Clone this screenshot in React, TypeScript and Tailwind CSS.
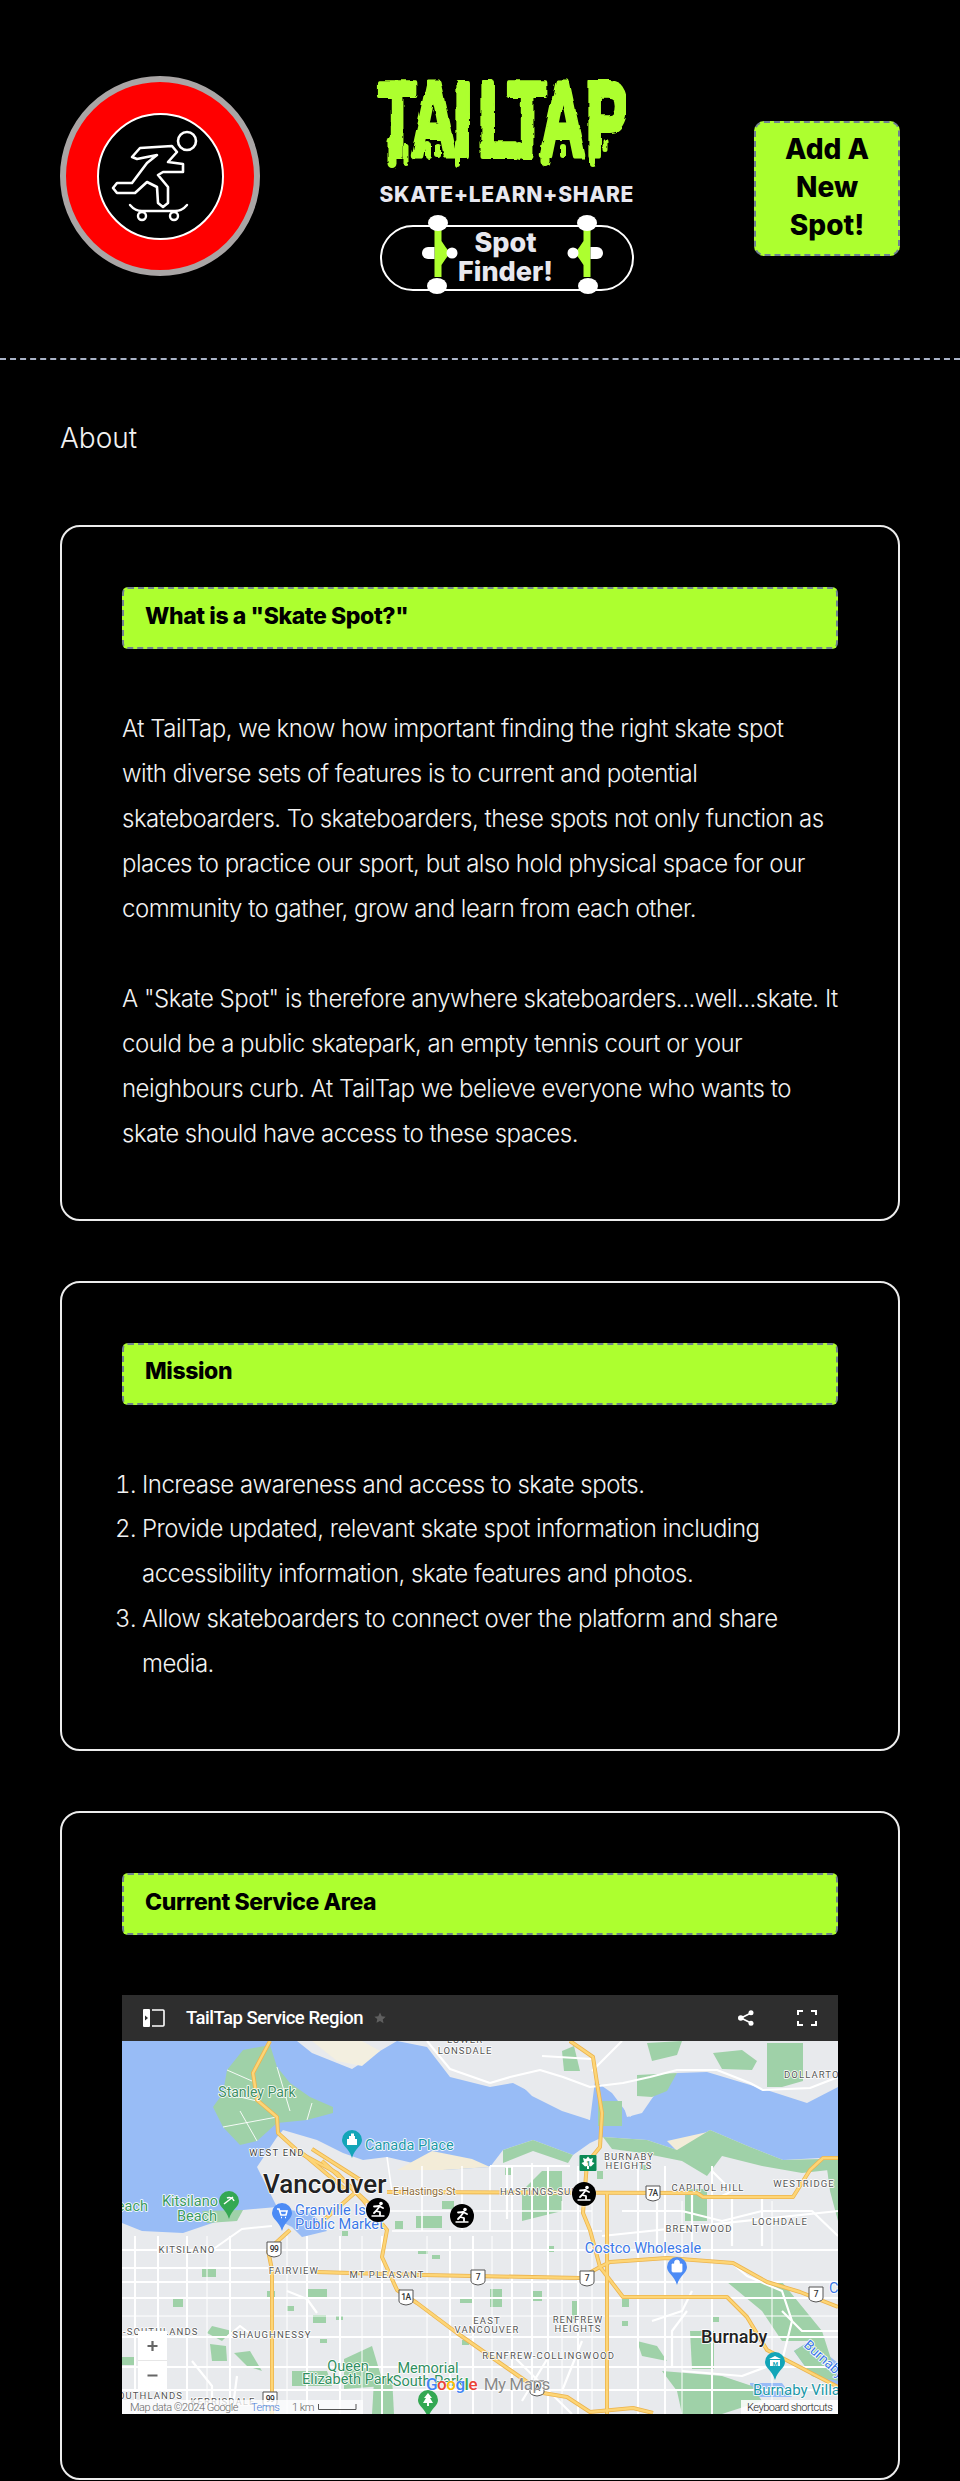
import React from "react";

const green = "#9fd1a8";
const parks: string[] = [
  "M148 4L121 9L105 29L101 52L91 66L101 86L118 104L135 100L155 82L185 79L211 72L211 66L188 56L168 42L155 26Z",
  "M645 2L681 2L681 40L660 46L645 46Z",
  "M515 34L555 32L545 50L530 56L515 55Z",
  "M525 2L560 0L555 14L530 20Z",
  "M591 12L620 9L635 20L630 29L600 28Z",
  "M420 130L440 130L440 170L400 180L400 150Z",
  "M381 109L411 99L451 114L446 122L411 110L381 122Z",
  "M481 96L525 99L555 109L588 89L628 106L661 119L700 118L716 116L716 128L680 132L640 125L600 115L585 135L560 120L520 112L490 108Z",
  "M704 120L716 120L716 180L708 150Z",
  "M563 148L585 148L585 180L563 180Z",
  "M80 170L121 169L115 180L85 182Z",
  "M568 290L592 290L592 328L570 328Z",
  "M540 330L600 335L630 345L640 360L600 373L560 373L555 350Z",
  "M605 241L660 241L700 290L716 340L690 335L672 310L688 300L660 300L640 270Z",
  "M170 330L205 330L210 345L170 345Z",
  "M222 318L250 305L262 345L222 348Z",
  "M90 285L110 290L100 300L85 292Z",
  "M88 303L104 305L105 320L90 320Z",
  "M112 312L128 310L140 330L125 325Z",
  "M186 248L205 248L205 258L186 258Z",
  "M252 340L270 335L272 373L250 373Z",
  "M515 300L535 305L545 320L520 315Z",
  "M476 60L500 60L500 85L476 85Z",
  "M440 10L452 5L458 30L442 30Z",
];
const smallParks = [
  [80, 228, 14, 8], [51, 258, 10, 8], [145, 250, 8, 6], [191, 274, 13, 8], [214, 275, 7, 4], [165, 265, 7, 5],
  [0, 316, 14, 8], [198, 298, 7, 4], [338, 256, 14, 6], [368, 248, 12, 18], [340, 299, 7, 5], [500, 280, 6, 5],
  [410, 250, 10, 10], [450, 260, 6, 18], [500, 258, 7, 8], [590, 276, 7, 5], [518, 124, 8, 5],
  [383, 127, 7, 7], [296, 208, 10, 5], [310, 214, 8, 4], [475, 130, 6, 8], [320, 160, 12, 8], [294, 175, 26, 12],
  [273, 180, 8, 8], [220, 190, 6, 5], [426, 205, 6, 6],
];
const yellow: string[] = [
  "M148 0L131 32L135 59L155 76L156 92L178 112L215 132L241 159L265 189L260 216L275 249L295 262L335 292L388 329L421 352L445 356L468 371L511 367L531 372",
  "M146 209L150 229L150 373",
  "M168 189L146 209",
  "M195 231L228 232L301 234L458 237L478 226L488 221L545 217L611 222L645 241L678 251L716 266",
  "M265 151L575 152L581 156L671 156L688 129L701 117L716 117",
  "M448 0L471 16L475 42L480 72L478 106L465 122L461 172L468 189L478 226L501 256L605 256L625 276L645 309L716 346",
  "M485 152L485 373",
  "M180 112L225 150M190 108L240 140M200 120L255 170M195 185L235 150",
];
const vLines = [13, 36, 65, 108, 185, 218, 260, 328, 351, 390, 410, 426, 456, 516, 543, 590];
const hLines = [209, 241, 257, 296, 326, 349];
const thinV = [85, 165, 240, 305, 370, 440, 470, 560, 650];
const thinH = [275];
const white: string[] = [
  "M368 42L388 36L418 29L441 36L468 46L501 42L528 36L555 29L595 29L628 42L641 49L688 47L716 36",
  "M305 0L328 28L368 42",
  "M420 15L470 18M500 0L470 30",
  "M385 125L385 178M368 125L448 125",
  "M535 150L535 205M570 150L570 205M610 155L610 205M640 155L640 205",
  "M480 195L716 170",
  "M500 170L560 170L600 180L640 170L690 170L716 195",
  "M590 130L610 150L600 155",
  "M610 222L625 235L660 250L670 280L660 320L620 335L560 330",
  "M716 290L680 290L660 270",
  "M530 280L560 270L570 250M565 270L550 290L550 325",
  "M386 310L450 373M430 310L400 360M460 300L440 350",
  "M105 296L118 285L135 298M70 320L90 345L90 373M115 335L110 373",
  "M165 250L185 258L195 272",
];

function T({ x, y, s = 9.5, c = "#555", a = "middle", w = 400, ls = 0, h = true, children, rot }: any) {
  return (
    <text x={x} y={y} fontSize={s} fill={c} textAnchor={a} fontWeight={w} letterSpacing={ls} stroke={h ? "#ffffff" : "none"} strokeWidth={h ? 1.6 : 0} paintOrder="stroke" strokeLinejoin="round" transform={rot ? `rotate(${rot} ${x} ${y})` : undefined}>
      {children}
    </text>
  );
}
function Shield({ x, y, t, c = "#333" }: any) {
  return (
    <g transform={`translate(${x} ${y})`}>
      <path d="M-7 -7L7 -7L7 4Q7 7 0 8Q-7 7 -7 4Z" fill="#fff" stroke="#555" strokeWidth="1" />
      <text x="0" y="3" fontSize="8.5" textAnchor="middle" fill={c} fontWeight="500">{t}</text>
    </g>
  );
}
function Pin({ x, y, c, tip = 18, children }: any) {
  return (
    <g transform={`translate(${x} ${y})`}>
      <path d={`M-10 0A10 10 0 1 1 10 0C10 6 3 8 0 ${tip}C-3 8 -10 6 -10 0Z`} fill={c} />
      {children}
    </g>
  );
}
function Skater({ x, y }: any) {
  return (
    <g transform={`translate(${x} ${y})`}>
      <circle r="12.5" fill="#fff" opacity="0.35" cy="0.8" />
      <circle r="12" fill="#000" />
      <circle cx="3" cy="-6.5" r="1.8" fill="#fff" />
      <path d="M-4 -3.5L2 -4L-2 1L-4 3M-2 1L2 2L2 5M1 -4L5 -2" fill="none" stroke="#fff" strokeWidth="1.8" strokeLinecap="round" strokeLinejoin="round" />
      <path d="M-6 6L6 6" stroke="#fff" strokeWidth="1.4" strokeLinecap="round" />
    </g>
  );
}

function MapDrawing() {
  return (
    <svg viewBox="0 0 716 373" width="716" height="373" className="block [font-family:Roboto,sans-serif]">
      <rect width="716" height="373" fill="#e8eaed" />
      <path d="M0 0L175 0L190 12L230 28L258 10L275 0L305 6L328 36L368 46L391 42L418 56L468 79L473 40L490 52L508 76L531 56L555 32L585 31L635 46L685 62L716 46L716 116L661 119L628 106L588 89L555 109L525 99L481 96L468 102L451 114L411 99L381 109L368 126L321 129L265 116L241 119L221 112L195 99L161 89L155 96L135 126L145 146L155 166L121 169L108 176L61 192L20 190L0 182Z" fill="#98bcf6" />
      <path d="M160 168L190 172L205 190L180 196L170 186L158 180Z" fill="#98bcf6" />
      <path d="M688 300L716 322L716 345L690 335L672 310Z" fill="#98bcf6" />
      <path d="M628 342L660 342L670 356L630 356Z" fill="#98bcf6" />
      <path d="M190 0L240 0L258 10L240 25L215 20Z" fill="#f3efe0" />
      <path d="M275 129L310 110L350 118L368 126L321 129Z" fill="#f3ecd8" />
      <path d="M400 45L440 40L468 60L468 79L440 70L410 55Z" fill="#e8eaed" />
      <path d="M500 60L531 56L520 72L505 76Z" fill="#e8eaed" />
      <path d="M545 100L590 90L600 110L560 115Z" fill="#f3ecd8" />
      {parks.map((d, i) => <path key={i} d={d} fill={green} />)}
      {smallParks.map((r, i) => <rect key={i} x={r[0]} y={r[1]} width={r[2]} height={r[3]} fill={green} />)}
      <g stroke="#ffffff" fill="none">
        <path d="M105 29L130 40M101 52L135 60M101 86L155 76M155 26L168 70M185 79L190 62M135 100L118 70" strokeWidth="0.9" />
        {thinV.map((x) => <path key={x} d={`M${x} ${x > 400 && x < 700 ? 160 : 195}V373`} strokeWidth="1" />)}
        {thinH.map((y) => <path key={y} d={`M0 ${y}H716`} strokeWidth="1" />)}
        {vLines.map((x) => <path key={x} d={`M${x} ${x > 370 ? 125 : 195}V373`} strokeWidth="2" />)}
        {hLines.map((y) => <path key={y} d={`M0 ${y}H716`} strokeWidth="2" />)}
        <path d="M265 116L270 151M300 125L300 190M340 125L340 190M368 125L368 190M410 122L410 190M265 170L470 170M270 190L480 190" strokeWidth="1.6" />
        <path d="M0 227H146M150 185L120 188L90 209" strokeWidth="2" />
        {white.map((d, i) => <path key={i} d={d} strokeWidth="2.2" strokeLinejoin="round" />)}
      </g>
      <g fill="none" strokeLinejoin="round">
        {yellow.map((d, i) => <path key={i} d={d} stroke="#ecb44e" strokeWidth="4" />)}
        {yellow.map((d, i) => <path key={i} d={d} stroke="#fdd576" strokeWidth="2.4" />)}
      </g>

      <T x={343} y={2} ls={1}>LOWER</T>
      <T x={343} y={13} ls={1}>LONSDALE</T>
      <T x={135} y={56} s={14} c="#3f8f63">Stanley Park</T>
      <T x={155} y={115} ls={1.2} c="#444">WEST END</T>
      <T x={243} y={109} s={14.5} c="#1b98a8" a="start">Canada Place</T>
      <T x={141} y={152} s={26} c="#222" a="start" w={500}>Vancouver</T>
      <T x={271} y={154} s={10.5} c="#8a6a3a" a="start">E Hastings St</T>
      <T x={378} y={154} ls={1} a="start" c="#555">HASTINGS-SUI</T>
      <T x={68} y={165} s={14.5} c="#3a9a5f">Kitsilano</T>
      <T x={75} y={180} s={14.5} c="#3a9a5f">Beach</T>
      <T x={26} y={170} s={14.5} c="#3a9a5f" a="end">Beach</T>
      <T x={173} y={174} s={14.5} c="#3b78e7" a="start">Granville Isl</T>
      <T x={173} y={188} s={14.5} c="#3b78e7" a="start">Public Market</T>
      <T x={507} y={119} ls={1.1}>BURNABY</T>
      <T x={507} y={128} ls={1.1}>HEIGHTS</T>
      <T x={586} y={150} ls={1.1}>CAPITOL HILL</T>
      <T x={682} y={146} ls={1.1}>WESTRIDGE</T>
      <T x={662} y={37} ls={1.1} a="start">DOLLARTON</T>
      <T x={658} y={184} ls={1.1}>LOCHDALE</T>
      <T x={577} y={191} ls={1.1}>BRENTWOOD</T>
      <T x={65} y={212} ls={1.1}>KITSILANO</T>
      <T x={172} y={233} ls={1.1}>FAIRVIEW</T>
      <T x={265} y={237} ls={1.1}>MT PLEASANT</T>
      <T x={1} y={294} ls={1.1} a="start">-SOUTHLANDS</T>
      <T x={150} y={297} ls={1.1}>SHAUGHNESSY</T>
      <T x={365} y={283} ls={1.1}>EAST</T>
      <T x={365} y={292} ls={1.1}>VANCOUVER</T>
      <T x={456} y={282} ls={1.1}>RENFREW</T>
      <T x={456} y={291} ls={1.1}>HEIGHTS</T>
      <T x={493} y={318} ls={1.1} a="end">RENFREW-COLLINGWOOD</T>
      <T x={61} y={358} ls={1.1} a="end">SOUTHLANDS</T>
      <T x={101} y={364} ls={1.1}>KERRISDALE</T>
      <T x={226} y={330} s={14.5} c="#2f8f5f">Queen</T>
      <T x={226} y={343} s={14.5} c="#2f8f5f">Elizabeth Park</T>
      <T x={306} y={332} s={14.5} c="#2f8f5f">Memorial</T>
      <T x={306} y={345} s={14.5} c="#2f8f5f">South Park</T>
      <T x={521} y={212} s={14.5} c="#3b78e7">Costco Wholesale</T>
      <T x={707} y={252} s={14.5} c="#3b78e7" a="start">Costco</T>
      <T x={579} y={302} s={18} c="#222" a="start" w={500}>Burnaby</T>
      <T x={681} y={305} s={13.5} c="#3b78e7" a="start" rot={42}>Burnaby Lake</T>
      <T x={631} y={354} s={15} c="#1b98a8" a="start">Burnaby Village</T>

      <Shield x={152} y={208} t="99" />
      <Shield x={148} y={358} t="99" />
      <Shield x={356} y={236} t="7" />
      <Shield x={284} y={256} t="1A" />
      <Shield x={465} y={237} t="7" />
      <Shield x={694} y={253} t="7" />
      <Shield x={531} y={152} t="7A" />
      <Shield x={415} y={347} t="A" />
      <g transform="translate(466 122)">
        <rect x="-8.5" y="-8" width="17" height="16" rx="1" fill="#0b8a55" />
        <path d="M0 -6.5L2 -4L5 -5L4 -1L6.5 0L3 3.5L1 3L1 6L-1 6L-1 3L-3 3.5L-6.5 0L-4 -1L-5 -5L-2 -4Z" fill="#fff" />
        <text y="3" fontSize="7" textAnchor="middle" fill="#0b8a55" fontWeight="700">1</text>
      </g>

      <Pin x={230} y={99} c="#13a5b8" tip={18}><path d="M-5 5V-1H-3V-4H-1V-6.5H2V-4H3V-1H5V5Z" fill="#fff" /></Pin>
      <Pin x={107} y={160} c="#34a853" tip={18}><path d="M-5 3L4 -4M-2 -3A5 5 0 0 1 5 0" stroke="#fff" strokeWidth="1.5" fill="none" /></Pin>
      <Pin x={160} y={172} c="#4c8bf5" tip={18}><path d="M-5 -4H-3L-1 2H4L5 -2H-2M-1 4.5H0M3 4.5H4" stroke="#fff" strokeWidth="1.6" fill="none" /></Pin>
      <Pin x={555} y={226} c="#4c8bf5" tip={18}><path d="M-5 -3H5V4Q5 5 4 5H-4Q-5 5 -5 4ZM-2.5 -3V-4.5A2.5 2.5 0 0 1 2.5 -4.5V-3" fill="#fff" stroke="#fff" strokeWidth="0.8" /></Pin>
      <Pin x={653} y={321} c="#13a5b8" tip={18}><path d="M-6 -3L0 -6L6 -3ZM-5 -2H5V4H-5Z" fill="#fff" /><text y="3.5" fontSize="6" textAnchor="middle" fill="#13a5b8" fontWeight="700">M</text></Pin>
      <Pin x={306} y={359} c="#34a853" tip={18}><path d="M0 -7L4 -2H2L5 3H1V6H-1V3H-5L-2 -2H-4Z" fill="#fff" /></Pin>

      <Skater x={256} y={169} />
      <Skater x={340} y={175} />
      <Skater x={462} y={153} />

      <text x={304} y={349} fontSize="17" fontWeight="500" stroke="#fff" strokeWidth="1" paintOrder="stroke">
        <tspan fill="#4285f4">G</tspan><tspan fill="#ea4335">o</tspan><tspan fill="#fbbc05">o</tspan><tspan fill="#4285f4">g</tspan><tspan fill="#34a853">l</tspan><tspan fill="#ea4335">e</tspan>
        <tspan fill="#8a8a8a" dx="3" fontWeight="400"> My Maps</tspan>
      </text>

      <rect x="16" y="290" width="29" height="59" fill="#fff" />
      <path d="M16 319.5H45" stroke="#e6e6e6" />
      <path d="M25.5 305H35.5M30.5 300V310M25.5 334.5H35.5" stroke="#666" strokeWidth="2.2" />
      <rect x="0" y="359" width="241" height="14" fill="#fff" fillOpacity="0.75" />
      <text x="8" y="370" fontSize="11" fill="#666">Map data ©2024 Google</text>
      <text x="129" y="370" fontSize="11" fill="#4a7fd8">Terms</text>
      <text x="170" y="370" fontSize="11" fill="#666">1 km</text>
      <path d="M196.5 363V368.5H234V363" fill="none" stroke="#555" strokeWidth="1" />
      <rect x="619" y="359" width="97" height="14" fill="#fff" fillOpacity="0.85" />
      <text x="625" y="370" fontSize="11" fill="#222">Keyboard shortcuts</text>
    </svg>
  );
}

function MapHeader() {
  return (
    <div className="flex h-[46px] items-center bg-[#2e2e2e] [font-family:Roboto,sans-serif]">
      <svg width="22" height="18" viewBox="0 0 22 18" className="ml-[21px]">
        <rect x="0" y="0" width="7" height="18" rx="1" fill="#fff" />
        <path d="M9 1H20a1 1 0 0 1 1 1V16a1 1 0 0 1-1 1H9" fill="none" stroke="#fff" strokeWidth="1.6" />
        <path d="M2 6.5L5 9L2 11.5Z" fill="#2e2e2e" />
      </svg>
      <span className="ml-[21px] text-[18.5px] font-medium text-white">TailTap Service Region</span>
      <svg width="12" height="12" viewBox="0 0 24 24" className="ml-[11px]" fill="#5f5f5f"><path d="M12 1l3.4 7.3 7.9 1-5.8 5.5 1.5 7.9L12 18l-7 3.7 1.5-7.9L.7 9.3l7.9-1z" /></svg>
      <svg width="16" height="16" viewBox="0 0 16 16" className="ml-auto" fill="#fff">
        <circle cx="13" cy="2.8" r="2.5" /><circle cx="13" cy="13.2" r="2.5" /><circle cx="2.8" cy="8" r="2.8" />
        <path d="M3 8L13 3M3 8L13 13" stroke="#fff" strokeWidth="1.6" />
      </svg>
      <svg width="20" height="16" viewBox="0 0 20 16" className="ml-[43px] mr-[21px]" fill="none" stroke="#fff" strokeWidth="2">
        <path d="M1 5V1H6M14 1H19V5M19 11V15H14M6 15H1V11" />
      </svg>
    </div>
  );
}

function SkaterLogo() {
  return (
    <svg viewBox="0 0 123 123" width="123" height="123" fill="none" stroke="#fff" strokeLinejoin="round" strokeLinecap="round">
      <g transform="translate(-39 -39)">
        <circle cx="127" cy="65" r="9" strokeWidth="2.6" />
        <path d="M72 81L80 72L112 70L117 76L108 86L123 88L123 96L103 96L98 99L108 111L108 127L103 131L98 127L97 111L87 106L75 117L57 117L53 112L57 107L72 107L87 87L97 79L77 83Z" strokeWidth="2.6" />
        <path d="M70 129Q75 135 82 135L115 135Q122 135 127 129" strokeWidth="2.4" />
        <circle cx="82" cy="140" r="4" strokeWidth="2.4" />
        <circle cx="114" cy="140" r="4" strokeWidth="2.4" />
      </g>
    </svg>
  );
}

function Truck({ x, flip }: { x: number; flip?: boolean }) {
  return (
    <g transform={`translate(${x} 0) scale(${flip ? -1 : 1} 1)`}>
      <path d="M-3.5 8V56H3.5V44C6 40 9 36 12 32C9 28 6 24 3.5 20V8Z" fill="#adff2f" />
      <ellipse cx="0" cy="2" rx="10" ry="8" fill="#fff" />
      <ellipse cx="-1" cy="65" rx="10" ry="8" fill="#fff" />
      <path d="M-3.5 26H-10A6 6 0 0 0 -10 38H-3.5Z" fill="#fff" />
      <circle cx="14" cy="32" r="5.5" fill="#fff" />
    </g>
  );
}

function Logo() {
  const sx = 0.59;
  const xs = [0, 33, 76, 101, 130, 162, 208].map((v) => (v + 2) / sx).join(" ");
  const drips = [
    [16, 60, 30, 4.5], [30, 66, 22, 2.5], [52, 64, 16, 3], [62, 66, 14, 3], [82, 62, 28, 3], [106, 62, 18, 2.5], [122, 64, 14, 3],
    [143, 64, 17, 3], [170, 62, 27, 4.5], [187, 66, 14, 3], [200, 62, 14, 2.5], [216, 64, 24, 3], [229, 60, 14, 2.5],
  ];
  return (
    <svg viewBox="0 0 250 92" width="250" height="92" className="-ml-[4px] block">
      <defs>
        <filter id="slime" x="-5%" y="-5%" width="110%" height="110%">
          <feTurbulence type="fractalNoise" baseFrequency="0.09" numOctaves="2" seed="4" />
          <feDisplacementMap in="SourceGraphic" scale="5" />
        </filter>
      </defs>
      <g filter="url(#slime)">
        <text y="78" fontSize="106" fontWeight="700" fill="#adff2f" stroke="#adff2f" strokeWidth="6" strokeLinejoin="round" transform={`scale(${sx} 1)`} x={xs} className="[font-family:'Liberation_Sans',Arial,sans-serif]">TAILTAP</text>
        {drips.map((d, i) => <rect key={i} x={d[0] - d[3]} y={d[1]} width={d[3] * 2} height={d[2]} rx={d[3]} fill="#adff2f" />)}
      </g>
    </svg>
  );
}

function Bar({ children }: { children: React.ReactNode }) {
  return (
    <div className="flex h-[62px] items-center rounded-[6px] border-2 border-dashed border-[#708090] bg-[#adff2f] pb-[4px] pl-[21px] text-[23px] font-extrabold tracking-[-0.4px] text-black [font-family:Inter,sans-serif]">
      {children}
    </div>
  );
}

function Card({ title, children, last }: { title: string; children: React.ReactNode; last?: boolean }) {
  return (
    <section className={`rounded-[20px] border-2 border-[#ececec] p-[60px] ${last ? "" : "mb-[60px]"}`}>
      <Bar>{title}</Bar>
      <div className="mt-[60px] text-2xl leading-[44.96px] font-light tracking-[-0.5px] whitespace-nowrap text-[#f2f2f2] [font-family:Inter,sans-serif]">{children}</div>
    </section>
  );
}

export default function App() {
  return (
    <div className="min-h-[2481px] bg-black text-white [font-family:Inter,sans-serif]">
      <header className="flex h-[360px] items-start justify-between border-b-2 border-dashed border-[#aab4c8] px-[60px] pt-[76px]">
        <div className="flex h-[200px] w-[200px] items-center justify-center rounded-full border-[6px] border-[#a9a5a5] bg-[#ff0000]">
          <div className="flex h-[127px] w-[127px] items-center justify-center rounded-full border-2 border-white bg-black">
            <SkaterLogo />
          </div>
        </div>
        <div className="mt-[2px] -ml-[1px] w-[254px]">
          <Logo />
          <div className="mt-[13px] text-center text-[21px] leading-[24px] font-extrabold tracking-[0.7px] whitespace-nowrap text-[#e8e8f0]">SKATE+LEARN+SHARE</div>
          <div className="relative mt-[18px] flex h-[66px] w-[254px] items-center justify-center rounded-full border-2 border-white text-center text-[27px] leading-[29px] font-extrabold text-[#e8e8ee]">
            <span className="-mt-[3px] -ml-[2px]">Spot<br />Finder!</span>
            <svg viewBox="0 0 254 73" width="254" height="73" className="absolute top-[-6px] left-[-2px] overflow-visible">
              <Truck x={58} />
              <Truck x={207} flip />
            </svg>
          </div>
        </div>
        <div className="mt-[45px] flex h-[135px] w-[146px] items-center justify-center rounded-[10px] border-2 border-dashed border-[#708090] bg-[#adff2f] pb-[3px] text-center text-[28px] leading-[38px] font-extrabold text-black">
          <span>Add A<br />New<br />Spot!</span>
        </div>
      </header>
      <main className="px-[60px]">
        <h1 className="mt-[60px] mb-[69px] text-[28px] leading-[36px] font-light text-[#f2f2f2]">About</h1>
        <Card title={'What is a "Skate Spot?"'}>
          <p className="-mt-[2px] mb-[2px]">
            At TailTap, we know how important finding the right skate spot<br />
            with diverse sets of features is to current and potential<br />
            skateboarders. To skateboarders, these spots not only function as<br />
            places to practice our sport, but also hold physical space for our<br />
            community to gather, grow and learn from each other.<br /><br />
            A "Skate Spot" is therefore anywhere skateboarders...well...skate. It<br />
            could be a public skatepark, an empty tennis court or your<br />
            neighbours curb. At TailTap we believe everyone who wants to<br />
            skate should have access to these spaces.
          </p>
        </Card>
        <Card title="Mission">
          <ol className="-mt-[2px] mb-[2px] list-decimal pl-[20px]">
            <li>Increase awareness and access to skate spots.</li>
            <li>Provide updated, relevant skate spot information including<br />accessibility information, skate features and photos.</li>
            <li>Allow skateboarders to connect over the platform and share<br />media.</li>
          </ol>
        </Card>
        <Card title="Current Service Area" last>
          <div className="mb-[4px] leading-none">
            <MapHeader />
            <MapDrawing />
          </div>
        </Card>
      </main>
    </div>
  );
}
